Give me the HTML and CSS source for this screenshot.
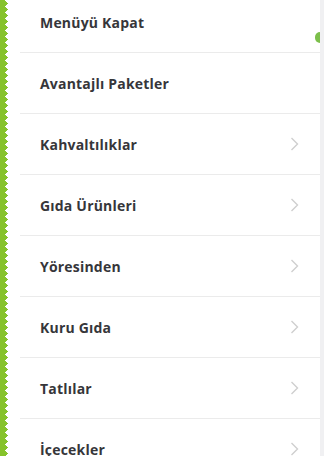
FILE: index.html
```html
<!DOCTYPE html>
<html lang="tr">
<head>
    <meta charset="UTF-8">
    <meta name="viewport" content="width=device-width, initial-scale=1.0">
    <title>Menü</title>
    <link rel="stylesheet" href="styles.css">
</head>
<body>
    <div class="kenar"></div>

    <nav class="menu">
        <ul class="menu-liste">
            <li class="menu-oge">Menüyü Kapat</li>
            <li class="menu-oge">Avantajlı Paketler</li>
            <li class="menu-oge">Kahvaltılıklar <span class="ok"><svg viewBox="0 0 9 14" width="9" height="14"><polyline points="1.5,1 7.5,7 1.5,13" /></svg></span></li>
            <li class="menu-oge">Gıda Ürünleri <span class="ok"><svg viewBox="0 0 9 14" width="9" height="14"><polyline points="1.5,1 7.5,7 1.5,13" /></svg></span></li>
            <li class="menu-oge">Yöresinden <span class="ok"><svg viewBox="0 0 9 14" width="9" height="14"><polyline points="1.5,1 7.5,7 1.5,13" /></svg></span></li>
            <li class="menu-oge">Kuru Gıda <span class="ok"><svg viewBox="0 0 9 14" width="9" height="14"><polyline points="1.5,1 7.5,7 1.5,13" /></svg></span></li>
            <li class="menu-oge">Tatlılar <span class="ok"><svg viewBox="0 0 9 14" width="9" height="14"><polyline points="1.5,1 7.5,7 1.5,13" /></svg></span></li>
            <li class="menu-oge">İçecekler <span class="ok"><svg viewBox="0 0 9 14" width="9" height="14"><polyline points="1.5,1 7.5,7 1.5,13" /></svg></span></li>
        </ul>
        <span class="nokta"></span>
    </nav>

    <div class="kaydirma"></div>
</body>
</html>
```

FILE: styles.css
```css
body {
    margin: 0;
    padding: 0;
    display: flex;
    height: 456px;
    overflow: hidden;
    background: #fff;
    font-family: 'Open Sans', 'DejaVu Sans', sans-serif;
    color: #36363a;
}

/* Sol tarafta tırtıklı yeşil kenar */
.kenar {
    width: 8px;
    flex: none;
    background-image:
        conic-gradient(from 225deg at 100% 50%, #86c32b 90deg, transparent 0),
        linear-gradient(#86c32b, #86c32b);
    background-size: 3px 6px, 5px 100%;
    background-position: 5px 0, 0 0;
    background-repeat: repeat-y, no-repeat;
}

.menu {
    position: relative;
    flex: 1;
    padding-left: 12px;
}

.menu-liste {
    list-style: none;
    margin: -8px 0 0;
    padding: 0;
}

.menu-oge {
    height: 60px;
    border-bottom: 1px solid #ebebeb;
    display: flex;
    align-items: center;
    justify-content: space-between;
    padding: 0 21px 0 20px;
    font-size: 14px;
    font-weight: 700;
    letter-spacing: 0.2px;
}

.ok svg {
    display: block;
    fill: none;
    stroke: #cfcfcf;
    stroke-width: 1.4;
}

.nokta {
    position: absolute;
    top: 32px;
    right: 0;
    width: 5px;
    height: 11px;
    border-radius: 6px 0 0 6px;
    background: #7cbf4b;
}

.kaydirma {
    width: 4px;
    flex: none;
    background: #f0f0f2;
}
```
